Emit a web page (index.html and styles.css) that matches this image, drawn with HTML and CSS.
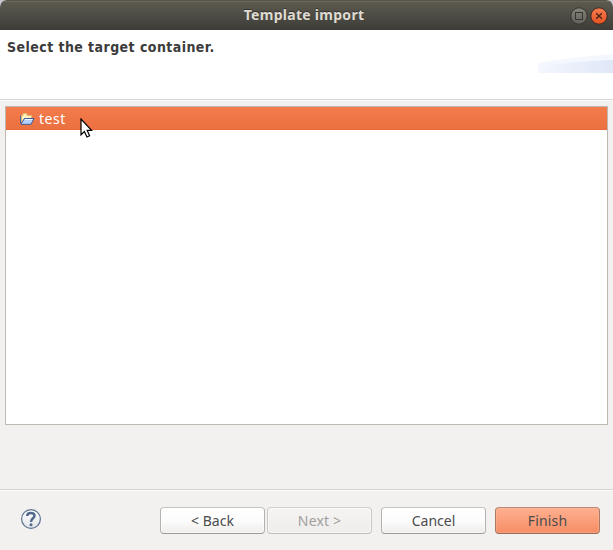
FILE: index.html
```
<!DOCTYPE html>
<html lang="en">
<head>
<meta charset="utf-8">
<title>Template import</title>
<link rel="stylesheet" href="styles.css">
</head>
<body>
<div class="window">
  <header class="titlebar">
    <span class="title">Template import</span>
    <div class="controls">
      <svg width="18" height="18" viewBox="0 0 18 18">
        <defs><linearGradient id="max" x2="0" y2="1"><stop stop-color="#85837a"/><stop offset="1" stop-color="#62615a"/></linearGradient></defs>
        <circle cx="9" cy="9" r="8.2" fill="url(#max)" stroke="#35342f"/>
        <rect x="5.5" y="5.5" width="7" height="7" fill="none" stroke="#35342f"/>
      </svg>
      <svg width="18" height="18" viewBox="0 0 18 18">
        <defs><linearGradient id="close" x2="0" y2="1"><stop stop-color="#f97c51"/><stop offset="1" stop-color="#e4511f"/></linearGradient></defs>
        <circle cx="9" cy="9" r="8.2" fill="url(#close)" stroke="#3b2b22"/>
        <path d="M6.2 6.2l5.6 5.6M11.8 6.2l-5.6 5.6" stroke="#48281a" stroke-width="1.4"/>
      </svg>
    </div>
  </header>
  <section class="banner">
    <h1>Select the target container.</h1>
    <svg class="ribbon" width="75" height="19" viewBox="0 0 75 19">
      <defs>
        <linearGradient id="sky"><stop stop-color="#f4f7fd"/><stop offset="1" stop-color="#dfe7f7"/></linearGradient>
      </defs>
      <path d="M0 9Q35 3 75 0V19H0Z" fill="#f4f7fd"/>
      <path d="M0 13Q38 7 75 6V19H0Z" fill="url(#sky)"/>
    </svg>
  </section>
  <main class="content">
    <div class="list">
      <div class="row">
        <svg width="16" height="14" viewBox="0 0 16 14">
          <path d="M2.5 9V3.5H4V1.5H8V3.5H12.5V6.5H5.5L3 10Z" fill="#fff0bd" stroke="#e2b56c"/>
          <path d="M1.5 3.5V11.5" stroke="#4566a6"/>
          <path d="M2 12L5.5 6.5H15L12 12.3H2Z" fill="#b5d2f6" stroke="#3d5a9b"/>
          <path d="M6 7.5H13.5" stroke="#edf7ff"/>
        </svg>
        <span>test</span>
      </div>
    </div>
    <svg class="pointer" width="14" height="21" viewBox="0 0 14 21">
      <path d="M1 1V16.8L4.4 13.5L7 19L9.6 17.8L7.2 12.4H11.6Z" fill="#fff" stroke="#000" stroke-width="1.2"/>
    </svg>
  </main>
  <footer class="footer">
    <svg class="help" width="22" height="22" viewBox="0 0 22 22">
      <defs><linearGradient id="helpfill" x2="0" y2="1"><stop stop-color="#fff"/><stop offset="1" stop-color="#e3e5e8"/></linearGradient></defs>
      <circle cx="11" cy="11" r="9.4" fill="url(#helpfill)" stroke="#5c7190" stroke-width="1.2"/>
      <path d="M7.2 8C7.2 4 14.5 4 14.5 7.7C14.5 10.4 11 10.3 11 14" fill="none" stroke="#52688c" stroke-width="2.5"/>
      <circle cx="11" cy="16.7" r="1.5" fill="#52688c"/>
    </svg>
    <div class="actions">
      <button>&lt; Back</button>
      <button class="next" disabled>Next &gt;</button>
      <button class="cancel">Cancel</button>
      <button class="finish">Finish</button>
    </div>
  </footer>
</div>
</body>
</html>
```
FILE: styles.css
```
* { box-sizing: border-box; }
body {
  margin: 0;
  background: #c9c8d2;
  color: #3c3c3c;
  font: 14px/20px "Noto Sans", sans-serif;
}
svg { display: block; flex: none; }
.window {
  display: flex;
  flex-direction: column;
  width: 613px;
  height: 550px;
  overflow: hidden;
  background: #f2f1f0;
  border-radius: 7px 7px 0 0;
}
.titlebar {
  display: grid;
  grid-template-columns: 1fr auto 1fr;
  align-items: center;
  height: 30px;
  flex: none;
  padding-right: 5px;
  background: linear-gradient(#5d5b50, #3d3c38);
  border-top: 1px solid #55534a;
  box-shadow: inset 0 1px #6a685a;
}
.title {
  grid-column: 2;
  padding-bottom: 2px;
  color: #dfdbd2;
  font-size: 14px;
  font-weight: 700;
  letter-spacing: .28px;
  text-shadow: 0 -1px #33322e;
}
.controls { display: flex; justify-content: flex-end; gap: 2px; }
.banner {
  display: flex;
  justify-content: space-between;
  height: 70px;
  flex: none;
  background: #fff;
  border-bottom: 1px solid #d9d7d5;
}
h1 {
  margin: 7px 0 0 7px;
  font-family: "DejaVu Sans Condensed", "DejaVu Sans", sans-serif;
  font-stretch: condensed;
  font-size: 14px;
  line-height: 20px;
  font-weight: 700;
  letter-spacing: .44px;
}
.ribbon { margin-top: 24px; }
.content {
  position: relative;
  height: 389px;
  flex: none;
  padding: 6px 5px 0;
  border-top: 1px solid #fbfafa;
}
.list {
  height: 319px;
  margin-top: -1px;
  background: #fff;
  border: 1px solid #bfb8b1;
}
.row {
  display: flex;
  align-items: center;
  gap: 4px;
  height: 23px;
  padding: 1px 0 0 13px;
  color: #fff;
  letter-spacing: .5px;
  background: linear-gradient(#f37c4c, #ec7040);
  border-bottom: 1px solid #e9693a;
}
.pointer { position: absolute; left: 80px; top: 17px; }
.footer {
  display: flex;
  justify-content: space-between;
  align-items: flex-start;
  height: 61px;
  padding: 17px 13px 0 20px;
  border-top: 1px solid #d4d2cf;
  box-shadow: inset 0 1px #fcfcfb;
}
.actions { display: flex; }
button {
  width: 105px;
  height: 27px;
  padding: 1px 0 0;
  color: #4c4c4c;
  font: 14px/20px "Noto Sans", sans-serif;
  background: linear-gradient(#fff, #fcfcfc 50%, #eeedeb);
  border: 1px solid #b4b2af;
  border-top-color: #c7c5c2;
  border-bottom-color: #9d9b98;
  border-radius: 4px;
  box-shadow: inset 0 0 0 1px #ffffff80;
}
.next {
  margin-left: 2px;
  color: #a09f9d;
  background: linear-gradient(#f5f4f3, #eeedeb);
  border-color: #d1cfcd #c9c7c5 #c1bfbc;
}
.next, .finish { letter-spacing: .15px; }
.cancel { margin-left: 9px; }
.finish {
  margin-left: 9px;
  background: linear-gradient(#ffaf90, #f58e65);
  border-color: #b98a77 #a97966 #996b59;
  box-shadow: inset 0 0 0 1px #ffc0a655;
}
.help { margin-top: 1px; }
```
